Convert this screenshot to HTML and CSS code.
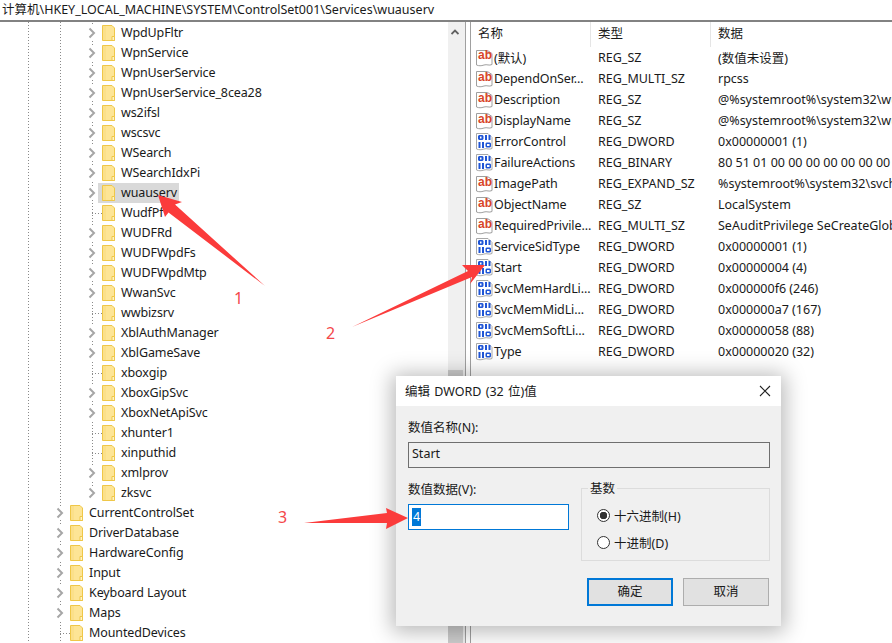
FILE: index.html
```html
<!DOCTYPE html>
<html lang="zh">
<head>
<meta charset="utf-8">
<title>注册表编辑器</title>
<link rel="stylesheet" href="styles.css">
</head>
<body>
<svg class="defs" width="0" height="0" aria-hidden="true">
  <defs>
    <symbol id="folder" viewBox="0 0 13 16">
      <path d="M.5.5h9.5l2.500 2.500v12.500H.5z" fill="#fde596" stroke="#efc748"/>
      <path d="M1 1h3v14H1z" fill="#fbe08a"/>
      <path d="M10 15.500v-4h2.500v4z" fill="#fff4c8" stroke="#efc748"/>
    </symbol>
    <symbol id="chev" viewBox="0 0 8 12">
      <path d="M1.500 1.500 6 6l-4.500 4.500" fill="none" stroke="#a6a6a6" stroke-width="2"/>
    </symbol>
    <symbol id="page" viewBox="0 0 17 18">
      <path d="M.5 1.500h11l4.500 3v11c-3 1.500-5 -.5-8 .5s-5 1-7.500 0z" fill="#fff" stroke="#9f9f9f"/>
      <path d="M11.500 1.500v3h4.500" fill="none" stroke="#c0c0c0"/>
    </symbol>
    <symbol id="binary" viewBox="0 0 17 18">
      <path d="M.5 .5h11.500l4 4v11c-3 1.500-5 -.5-8 .5s-5 1-7.500 0z" fill="#fff" stroke="#a8a8a8"/>
      <g fill="#1f55d6">
        <path fill-rule="evenodd" d="M3 2h3.500l1 1v3l-1 1H3L2 6V3zM4 3.500v2h1.500v-2z"/>
        <path d="M9 2h2v5H9zM12.500 2h2v5h-2zM2.500 9h2v6h-2zM6 9h2v6H6z"/>
        <path fill-rule="evenodd" d="M10.500 9.500H14l1 1v3l-1 1h-3.500l-1-1v-3zM11 11v2h2.500v-2z"/>
      </g>
    </symbol>
  </defs>
</svg>

<div class="app">
  <div class="address">计算机\HKEY_LOCAL_MACHINE\SYSTEM\ControlSet001\Services\wuauserv</div>
  <div class="panes">
    <div class="tree">
      <div class="group">
        <div class="row l3"><svg class="chev"><use href="#chev"/></svg><svg class="folder"><use href="#folder"/></svg><span class="label">WpdUpFltr</span></div>
        <div class="row l3"><svg class="chev"><use href="#chev"/></svg><svg class="folder"><use href="#folder"/></svg><span class="label">WpnService</span></div>
        <div class="row l3"><svg class="chev"><use href="#chev"/></svg><svg class="folder"><use href="#folder"/></svg><span class="label">WpnUserService</span></div>
        <div class="row l3"><svg class="chev"><use href="#chev"/></svg><svg class="folder"><use href="#folder"/></svg><span class="label">WpnUserService_8cea28</span></div>
        <div class="row l3"><svg class="chev"><use href="#chev"/></svg><svg class="folder"><use href="#folder"/></svg><span class="label">ws2ifsl</span></div>
        <div class="row l3"><svg class="chev"><use href="#chev"/></svg><svg class="folder"><use href="#folder"/></svg><span class="label">wscsvc</span></div>
        <div class="row l3"><svg class="chev"><use href="#chev"/></svg><svg class="folder"><use href="#folder"/></svg><span class="label">WSearch</span></div>
        <div class="row l3"><svg class="chev"><use href="#chev"/></svg><svg class="folder"><use href="#folder"/></svg><span class="label">WSearchIdxPi</span></div>
        <div class="row l3"><svg class="chev"><use href="#chev"/></svg><span class="selected"><svg class="folder"><use href="#folder"/></svg><span class="label">wuauserv</span></span></div>
        <div class="row l3"><span class="stub"></span><svg class="folder"><use href="#folder"/></svg><span class="label">WudfPf</span></div>
        <div class="row l3"><svg class="chev"><use href="#chev"/></svg><svg class="folder"><use href="#folder"/></svg><span class="label">WUDFRd</span></div>
        <div class="row l3"><svg class="chev"><use href="#chev"/></svg><svg class="folder"><use href="#folder"/></svg><span class="label">WUDFWpdFs</span></div>
        <div class="row l3"><svg class="chev"><use href="#chev"/></svg><svg class="folder"><use href="#folder"/></svg><span class="label">WUDFWpdMtp</span></div>
        <div class="row l3"><svg class="chev"><use href="#chev"/></svg><svg class="folder"><use href="#folder"/></svg><span class="label">WwanSvc</span></div>
        <div class="row l3"><span class="stub"></span><svg class="folder"><use href="#folder"/></svg><span class="label">wwbizsrv</span></div>
        <div class="row l3"><svg class="chev"><use href="#chev"/></svg><svg class="folder"><use href="#folder"/></svg><span class="label">XblAuthManager</span></div>
        <div class="row l3"><svg class="chev"><use href="#chev"/></svg><svg class="folder"><use href="#folder"/></svg><span class="label">XblGameSave</span></div>
        <div class="row l3"><span class="stub"></span><svg class="folder"><use href="#folder"/></svg><span class="label">xboxgip</span></div>
        <div class="row l3"><svg class="chev"><use href="#chev"/></svg><svg class="folder"><use href="#folder"/></svg><span class="label">XboxGipSvc</span></div>
        <div class="row l3"><svg class="chev"><use href="#chev"/></svg><svg class="folder"><use href="#folder"/></svg><span class="label">XboxNetApiSvc</span></div>
        <div class="row l3"><span class="stub"></span><svg class="folder"><use href="#folder"/></svg><span class="label">xhunter1</span></div>
        <div class="row l3"><span class="stub"></span><svg class="folder"><use href="#folder"/></svg><span class="label">xinputhid</span></div>
        <div class="row l3"><svg class="chev"><use href="#chev"/></svg><svg class="folder"><use href="#folder"/></svg><span class="label">xmlprov</span></div>
        <div class="row l3"><svg class="chev"><use href="#chev"/></svg><svg class="folder"><use href="#folder"/></svg><span class="label">zksvc</span></div>
      </div>
      <div class="row l2"><svg class="chev"><use href="#chev"/></svg><svg class="folder"><use href="#folder"/></svg><span class="label">CurrentControlSet</span></div>
      <div class="row l2"><svg class="chev"><use href="#chev"/></svg><svg class="folder"><use href="#folder"/></svg><span class="label">DriverDatabase</span></div>
      <div class="row l2"><svg class="chev"><use href="#chev"/></svg><svg class="folder"><use href="#folder"/></svg><span class="label">HardwareConfig</span></div>
      <div class="row l2"><svg class="chev"><use href="#chev"/></svg><svg class="folder"><use href="#folder"/></svg><span class="label">Input</span></div>
      <div class="row l2"><svg class="chev"><use href="#chev"/></svg><svg class="folder"><use href="#folder"/></svg><span class="label">Keyboard Layout</span></div>
      <div class="row l2"><svg class="chev"><use href="#chev"/></svg><svg class="folder"><use href="#folder"/></svg><span class="label">Maps</span></div>
      <div class="row l2"><span class="stub"></span><svg class="folder"><use href="#folder"/></svg><span class="label">MountedDevices</span></div>
    </div>

    <div class="scrollbar">
      <svg class="scroll-up" width="8" height="6" viewBox="0 0 8 6"><path d="M.5 5 4 1.500 7.500 5" fill="none" stroke="#606060" stroke-width="1.800"/></svg>
      <div class="thumb"></div>
    </div>
    <div class="splitter"></div>

    <div class="list">
      <div class="list-head">
        <span>名称</span><span>类型</span><span>数据</span>
      </div>
      <div class="item"><span class="name"><svg class="ic"><use href="#page"/></svg><b class="ab">ab</b>(默认)</span><span>REG_SZ</span><span>(数值未设置)</span></div>
      <div class="item"><span class="name"><svg class="ic"><use href="#page"/></svg><b class="ab">ab</b>DependOnSer...</span><span>REG_MULTI_SZ</span><span>rpcss</span></div>
      <div class="item"><span class="name"><svg class="ic"><use href="#page"/></svg><b class="ab">ab</b>Description</span><span>REG_SZ</span><span>@%systemroot%\system32\wuaueng.dll,-106</span></div>
      <div class="item"><span class="name"><svg class="ic"><use href="#page"/></svg><b class="ab">ab</b>DisplayName</span><span>REG_SZ</span><span>@%systemroot%\system32\wuaueng.dll,-105</span></div>
      <div class="item"><span class="name"><svg class="ic"><use href="#binary"/></svg>ErrorControl</span><span>REG_DWORD</span><span>0x00000001 (1)</span></div>
      <div class="item"><span class="name"><svg class="ic"><use href="#binary"/></svg>FailureActions</span><span>REG_BINARY</span><span>80 51 01 00 00 00 00 00 00 00 00 00 00</span></div>
      <div class="item"><span class="name"><svg class="ic"><use href="#page"/></svg><b class="ab">ab</b>ImagePath</span><span>REG_EXPAND_SZ</span><span>%systemroot%\system32\svchost.exe -k netsvcs</span></div>
      <div class="item"><span class="name"><svg class="ic"><use href="#page"/></svg><b class="ab">ab</b>ObjectName</span><span>REG_SZ</span><span>LocalSystem</span></div>
      <div class="item"><span class="name"><svg class="ic"><use href="#page"/></svg><b class="ab">ab</b>RequiredPrivile...</span><span>REG_MULTI_SZ</span><span>SeAuditPrivilege SeCreateGlobalPrivilege</span></div>
      <div class="item"><span class="name"><svg class="ic"><use href="#binary"/></svg>ServiceSidType</span><span>REG_DWORD</span><span>0x00000001 (1)</span></div>
      <div class="item"><span class="name"><svg class="ic"><use href="#binary"/></svg>Start</span><span>REG_DWORD</span><span>0x00000004 (4)</span></div>
      <div class="item"><span class="name"><svg class="ic"><use href="#binary"/></svg>SvcMemHardLi...</span><span>REG_DWORD</span><span>0x000000f6 (246)</span></div>
      <div class="item"><span class="name"><svg class="ic"><use href="#binary"/></svg>SvcMemMidLi...</span><span>REG_DWORD</span><span>0x000000a7 (167)</span></div>
      <div class="item"><span class="name"><svg class="ic"><use href="#binary"/></svg>SvcMemSoftLi...</span><span>REG_DWORD</span><span>0x00000058 (88)</span></div>
      <div class="item"><span class="name"><svg class="ic"><use href="#binary"/></svg>Type</span><span>REG_DWORD</span><span>0x00000020 (32)</span></div>
    </div>
  </div>
</div>

<div class="dialog">
  <div class="dialog-title">
    <span>编辑 DWORD (32 位)值</span>
    <svg width="12" height="12" viewBox="0 0 12 12"><path d="M1 1l10 10M11 1 1 11" stroke="#222" stroke-width="1.100" fill="none"/></svg>
  </div>
  <div class="dialog-body">
    <div class="field-label">数值名称(N):</div>
    <div class="name-box">Start</div>
    <div class="dialog-columns">
      <div class="data-col">
        <div class="field-label">数值数据(V):</div>
        <div class="data-box"><span class="sel">4</span></div>
      </div>
      <fieldset class="base">
        <legend>基数</legend>
        <div class="radio"><span class="dot on"></span>十六进制(H)</div>
        <div class="radio"><span class="dot"></span>十进制(D)</div>
      </fieldset>
    </div>
    <div class="dialog-buttons">
      <div class="btn primary">确定</div>
      <div class="btn">取消</div>
    </div>
  </div>
</div>

<svg class="annot" width="892" height="643" viewBox="0 0 892 643" aria-hidden="true">
  <g fill="#fb3b3b">
    <path d="M158 195 182 202 175 204.500 265 286 168.500 212.500 165 217z"/>
    <path d="M485 265 470 284 472 277 352 327 468 271 462 265z"/>
    <path d="M408 518 386 529 387 523 304 523 387 513 386 508z"/>
  </g>
  <g fill="#f4474a" font-family="'Noto Sans',sans-serif" font-size="16">
    <text x="234" y="304">1</text>
    <text x="326" y="339">2</text>
    <text x="278" y="523">3</text>
  </g>
</svg>
</body>
</html>
```

FILE: styles.css
```css
* { box-sizing: border-box; }

html, body {
  margin: 0;
  width: 892px;
  height: 643px;
  overflow: hidden;
  background: #fff;
}

body {
  position: relative;
  font-family: "Noto Sans", "Noto Sans CJK SC", sans-serif;
  font-size: 12.5px;
  color: #1a1a1a;
}

.defs { position: absolute; }

.app {
  display: flex;
  flex-direction: column;
  height: 643px;
}

.address {
  height: 22px;
  flex: none;
  padding-left: 2px;
  line-height: 19px;
  white-space: nowrap;
  border-bottom: 2px solid #828282;
}

.panes {
  flex: 1;
  display: flex;
  min-height: 0;
}

/* tree */
.tree {
  width: 448px;
  flex: none;
  padding-top: 1px;
  overflow: hidden;
  background-image:
    repeating-linear-gradient(#8a8a8a 0 1px, transparent 1px 3px),
    repeating-linear-gradient(#8a8a8a 0 1px, transparent 1px 3px);
  background-size: 1px 100%, 1px 100%;
  background-position: 28px 0, 60px 0;
  background-repeat: no-repeat;
}

.group {
  background-image: repeating-linear-gradient(#8a8a8a 0 1px, transparent 1px 3px);
  background-size: 1px calc(100% - 10px);
  background-position: 92px 0;
  background-repeat: no-repeat;
}

.row {
  height: 20px;
  display: flex;
  align-items: center;
  white-space: nowrap;
}

.row.l3 { padding-left: 88px; }
.row.l2 { padding-left: 56px; }

.chev {
  width: 8px;
  height: 12px;
  margin-right: 6px;
  flex: none;
  background: #fff;
  box-shadow: 0 0 0 1px #fff;
}

.stub {
  width: 10px;
  height: 1px;
  margin-left: 4px;
  flex: none;
  background-image: repeating-linear-gradient(90deg, #8a8a8a 0 1px, transparent 1px 3px);
}

.folder {
  width: 13px;
  height: 16px;
  flex: none;
}

.label {
  margin-left: 6px;
  margin-bottom: 2px;
  letter-spacing: -.11px;
}

.selected {
  display: flex;
  align-items: center;
  height: 20px;
  margin-left: -4px;
  padding-left: 4px;
  padding-right: 1px;
  background: #d9d9d9;
  width: 81px;
}

/* scrollbar and splitter */
.scrollbar {
  width: 18px;
  flex: none;
  display: flex;
  flex-direction: column;
  align-items: center;
  background: #f0f0f0;
  border-right: 1px solid #a0a0a0;
}

.scroll-up {
  margin-top: 7px;
  margin-left: -4px;
}

.thumb {
  margin-top: 335px;
  flex: 1;
  width: 15px;
  margin-right: 2px;
  background: #cdcdcd;
}

.splitter {
  width: 5px;
  flex: none;
  border-right: 1px solid #a0a0a0;
}

/* list */
.list {
  flex: 1;
  min-width: 0;
  overflow: hidden;
}

.list-head {
  height: 25px;
  display: grid;
  grid-template-columns: 120px 120px 1fr;
}

.list-head span {
  padding-left: 7px;
  line-height: 24px;
  border-right: 1px solid #e5e5e5;
}

.list-head span:last-child { border-right: 0; }

.item {
  height: 21px;
  display: grid;
  grid-template-columns: 120px 120px 1fr;
  align-items: center;
  white-space: nowrap;
}

.item > span:not(.name) { padding-left: 7px; }

.name {
  position: relative;
  display: flex;
  align-items: center;
  padding-left: 5px;
  letter-spacing: -.1px;
}

.ic {
  width: 17px;
  height: 18px;
  margin-right: 1px;
  flex: none;
}

.ab {
  position: absolute;
  left: 7px;
  top: -1px;
  font-family: "Liberation Sans", sans-serif;
  font-size: 12px;
  font-weight: 700;
  letter-spacing: 0;
  line-height: 16px;
  color: #d8452a;
}

/* dialog */
.dialog {
  position: absolute;
  left: 396px;
  top: 376px;
  width: 385px;
  height: 250px;
  background: #f0f0f0;
  box-shadow: 0 2px 20px 4px rgba(0, 0, 0, .28);
}

.dialog-title {
  height: 30px;
  background: #fff;
  display: flex;
  align-items: center;
  justify-content: space-between;
  padding: 0 10px 1px 9px;
  word-spacing: 1px;
}

.dialog-body { padding: 13px 11px 0 12px; }

.field-label {
  height: 17px;
  line-height: 17px;
}

.name-box {
  height: 26px;
  margin-top: 6px;
  padding-left: 3px;
  line-height: 22px;
  border: 1px solid #6f6f6f;
  background: #f0f0f0;
}

.dialog-columns {
  display: flex;
  margin-top: 13px;
}

.data-col { width: 173px; flex: none; }

.data-box {
  height: 26px;
  width: 161px;
  margin-top: 6px;
  padding: 3px 3px;
  background: #fff;
  border: 1px solid #0078d7;
}

.sel {
  display: inline-block;
  height: 18px;
  padding: 0 1px;
  line-height: 17px;
  color: #fff;
  background: #0078d7;
}

.base {
  flex: 1;
  height: 81px;
  margin: -1px 0 0;
  padding: 10px 0 0 15px;
  border: 1px solid #dcdcdc;
  min-width: 0;
}

.base legend {
  padding: 0 2px;
  margin-left: -9px;
  line-height: 17px;
}

.radio {
  display: flex;
  align-items: center;
  gap: 4px;
  height: 17px;
  margin-bottom: 10px;
}

.dot {
  width: 13px;
  height: 13px;
  border-radius: 50%;
  border: 1px solid #333;
  background: #fff;
  flex: none;
}

.dot.on {
  background: radial-gradient(circle, #333 0 3.500px, #fff 4px);
}

.dialog-buttons {
  display: flex;
  justify-content: flex-end;
  gap: 10px;
  margin-top: 17px;
  padding-right: 1px;
}

.btn {
  width: 86px;
  height: 28px;
  line-height: 25px;
  text-align: center;
  background: #e1e1e1;
  border: 1px solid #adadad;
}

.btn.primary { border: 2px solid #0078d7; line-height: 23px; }

/* annotations */
.annot {
  position: absolute;
  left: 0;
  top: 0;
  pointer-events: none;
}
```
